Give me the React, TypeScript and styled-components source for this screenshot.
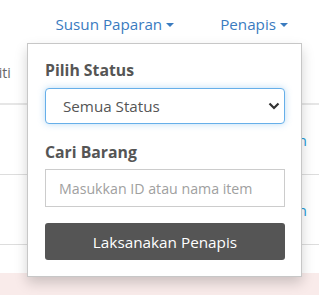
import React from "react";
import styled, { createGlobalStyle } from "styled-components";

const GlobalStyle = createGlobalStyle`
  html, body {
    margin: 0;
    padding: 0;
    background: #ffffff;
    font-family: "Open Sans", "Liberation Sans", sans-serif;
  }
  * {
    box-sizing: border-box;
  }
`;

const Page = styled.div`
  position: relative;
  width: 331px;
  height: 295px;
  overflow: hidden;
  background: #ffffff;
`;

const Toolbar = styled.div`
  height: 50px;
  display: flex;
  flex-direction: row;
  align-items: flex-start;
  justify-content: flex-end;
  gap: 46px;
  padding: 12px 43px 0 0;
`;

const Toggle = styled.button`
  display: flex;
  align-items: center;
  gap: 4px;
  padding: 0;
  border: 0;
  background: none;
  font-family: inherit;
  font-size: 15.2px;
  line-height: 24px;
  color: #3a7bbf;
  cursor: pointer;
`;

const Caret = styled.span`
  width: 0;
  height: 0;
  border-left: 4px solid transparent;
  border-right: 4px solid transparent;
  border-top: 4px solid #3a7bbf;
  margin-top: 2px;
`;

const Table = styled.div`
  margin-left: -41px;
  width: calc(100% + 41px - 12px);
  display: flex;
  flex-direction: column;
`;

const HeadRow = styled.div`
  display: flex;
  padding: 13px 8px 20px;
  border-bottom: 2px solid #e6e6e6;
  font-size: 14px;
  line-height: 20px;
  color: #666666;
`;

const Row = styled.div<{ $tint?: boolean; $line?: boolean; $height: number }>`
  display: flex;
  align-items: center;
  justify-content: flex-end;
  height: ${(p) => p.$height}px;
  padding: 0 12px;
  border-bottom: ${(p) => (p.$line ? "1px solid #dddddd" : "none")};
  background: ${(p) => (p.$tint ? "#f9ebea" : "transparent")};
`;

const RowLink = styled.a`
  font-size: 15px;
  line-height: 20px;
  color: #1d9ad6;
  text-decoration: none;
`;

const Panel = styled.div`
  position: absolute;
  top: 43px;
  left: 27px;
  width: 275px;
  background: #ffffff;
  border: 1px solid rgba(0, 0, 0, 0.22);
  box-shadow: 0 6px 12px rgba(0, 0, 0, 0.175);
  padding: 16px 16px 16px 17px;
  display: flex;
  flex-direction: column;
`;

const Label = styled.label<{ $gap?: number }>`
  display: block;
  font-size: 15.8px;
  line-height: 20px;
  font-weight: 700;
  color: #555555;
  margin-top: ${(p) => p.$gap ?? 0}px;
  margin-bottom: 8px;
`;

const SelectWrap = styled.div`
  position: relative;
  width: 240px;
  height: 36px;
`;

const Select = styled.select`
  appearance: none;
  width: 100%;
  height: 100%;
  padding: 0 30px 0 17px;
  font-family: inherit;
  font-size: 15.2px;
  color: #555555;
  background: #ffffff;
  border: 1px solid #66afe9;
  border-radius: 4px;
  box-shadow: 0 0 7px rgba(102, 175, 233, 0.45);
  outline: none;
`;

const Chevron = styled.svg`
  position: absolute;
  right: 5px;
  top: 14px;
  pointer-events: none;
`;

const Input = styled.input`
  width: 240px;
  height: 38px;
  margin-top: -1px;
  padding: 0 13px;
  font-family: inherit;
  font-size: 14.2px;
  color: #555555;
  border: 1px solid #cccccc;
  border-radius: 0;
  outline: none;
  &::placeholder {
    color: #a0a0a0;
  }
`;

const Submit = styled.button`
  width: 240px;
  height: 37px;
  margin-top: 16px;
  border: 0;
  border-radius: 3px;
  background: #555555;
  color: #ffffff;
  font-family: inherit;
  font-size: 15.3px;
  cursor: pointer;
`;

export default function App() {
  return (
    <Page>
      <GlobalStyle />
      <Toolbar>
        <Toggle>
          Susun Paparan <Caret />
        </Toggle>
        <Toggle>
          Penapis <Caret />
        </Toggle>
      </Toolbar>
      <Table>
        <HeadRow>Aktiviti</HeadRow>
        <Row $height={70} $line>
          <RowLink href="#">Lihat Butiran</RowLink>
        </Row>
        <Row $height={70} $line>
          <RowLink href="#">Lihat Butiran</RowLink>
        </Row>
        <Row $height={28} />
        <Row $height={40} $tint />
      </Table>
      <Panel>
        <Label>Pilih Status</Label>
        <SelectWrap>
          <Select defaultValue="all">
            <option value="all">Semua Status</option>
            <option value="active">Aktif</option>
            <option value="inactive">Tidak Aktif</option>
          </Select>
          <Chevron width="12" height="8" viewBox="0 0 12 8">
            <path d="M1.5 1.5 L6 6 L10.5 1.5" fill="none" stroke="#333" strokeWidth="2.2" />
          </Chevron>
        </SelectWrap>
        <Label $gap={18}>Cari Barang</Label>
        <Input placeholder="Masukkan ID atau nama item" />
        <Submit>Laksanakan Penapis</Submit>
      </Panel>
    </Page>
  );
}
